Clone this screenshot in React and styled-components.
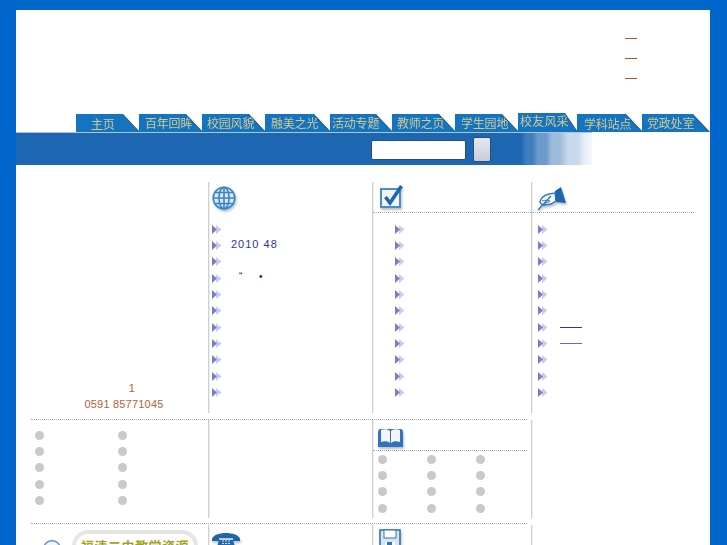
import React from 'react'
import styled, { createGlobalStyle } from 'styled-components'

const Global = createGlobalStyle`
  html, body { margin: 0; padding: 0; height: 545px; overflow: hidden; background: #0066cc; }
  body { font-family: "Liberation Sans", "Noto Sans CJK SC", sans-serif; }
`

const Page = styled.div`
  width: 694px;
  height: 535px;
  margin: 10px 0 0 16px;
  background: #fff;
  overflow: hidden;
`

const Header = styled.div`
  height: 94px;
  padding-top: 28px;
  box-sizing: border-box;
  display: flex;
  flex-direction: column;
  align-items: flex-end;
  gap: 19px;
  padding-right: 73px;
`

const Dash = styled.span`
  width: 12px;
  height: 1px;
  background: #c2531f;
`

const Tabs = styled.div`
  height: 18px;
  padding-left: 60px;
  display: flex;
  margin-top: 10px;
  align-items: flex-end;
`

const Tab = styled.div`
  width: ${({ $w }) => $w}px;
  height: ${({ $active }) => ($active ? 19 : 18)}px;
  filter: drop-shadow(1px 0 0 #234f7c);
`

const TabFace = styled.div`
  height: 100%;
  box-sizing: border-box;
  padding: ${({ $drop }) => $drop}px 0 0 ${({ $pad }) => $pad}px;
  background: #1474c0;
  clip-path: polygon(0 0, calc(100% - ${({ $active }) => ($active ? 13 : 17)}px) 0, 100% 100%, 0 100%);
  color: #d2c98e;
  font-size: 12px;
  line-height: 18px;
  letter-spacing: ${({ $active }) => ($active ? 0.2 : -0.2)}px;
  white-space: nowrap;
`

const SearchBar = styled.div`
  width: 576px;
  height: 33px;
  border-top: 1px solid #a9c7e4;
  display: flex;
  align-items: center;
  padding-left: 355px;
  box-sizing: border-box;
  gap: 7px;
  background: linear-gradient(
    90deg,
    #1c66b2 0,
    #1c66b2 505px,
    #3f7dbd 510px,
    #3f7dbd 516px,
    #6c9acb 522px,
    #6c9acb 530px,
    #9dbcdc 536px,
    #9dbcdc 544px,
    #c8d9eb 552px,
    #c8d9eb 562px,
    #e6eef7 568px,
    #f4f8fc 576px
  );
`

const SearchInput = styled.div`
  width: 95px;
  height: 20px;
  margin-top: 2px;
  box-sizing: border-box;
  background: #fff;
  border: 1px solid #24507f;
  border-radius: 2px;
`

const SearchButton = styled.div`
  width: 18px;
  height: 25px;
  box-sizing: border-box;
  background: linear-gradient(#e6e8ee, #c9ccd6);
  border: 1px solid #24507f;
  border-radius: 2px;
`

const TopGrid = styled.div`
  display: grid;
  grid-template-columns: 192px 164px 159px 163px;
  margin-top: 17px;
  height: 231px;
`

const Cell = styled.div`
  box-sizing: border-box;
  border-left: 1px solid #cfcfcf;
  box-shadow: inset 1px 0 0 #eeeeee;
`

const Contact = styled.div`
  box-sizing: border-box;
  padding: 198px 0 0 24px;
  text-align: center;
  color: #b5623a;
  font-size: 11px;
  line-height: 16px;
  letter-spacing: 0.2px;
`

const ContactNo = styled.span`
  margin-left: 16px;
`

const IconHead = styled.div`
  height: 31px;
  padding: ${({ $top }) => $top}px 0 0 ${({ $pad }) => $pad}px;
  margin-right: ${({ $trim }) => $trim || 0}px;
  box-sizing: border-box;
  border-bottom: ${({ $dotted }) => ($dotted ? '1px dotted #aaa' : 'none')};
  display: flex;
  align-items: flex-start;
  svg { filter: drop-shadow(1px 2px 1px rgba(0, 0, 0, 0.25)); }
`

const ArrowList = styled.div`
  padding: 8px 0 0 ${({ $left }) => $left}px;
  display: flex;
  flex-direction: column;
`

const ArrowRow = styled.div`
  height: 16.35px;
  display: flex;
  align-items: center;
  gap: 9px;
  color: #33339a;
  font-size: 11px;
  letter-spacing: 1px;
  white-space: pre;
`

const RowText = styled.span`
  margin-bottom: 3px;
`

const Marks = styled.span`
  margin: 0 0 3px 8px;
  color: #1a1a80;
  font-size: 10px;
  word-spacing: 12px;
`

const RowLine = styled.span`
  width: 22px;
  height: 1px;
  margin-left: 3px;
  background: ${({ $faint }) => ($faint ? '#6a6ab8' : '#3333a0')};
`

const Rule = styled.div`
  width: 496px;
  margin: ${({ $gap }) => $gap}px 0 0 15px;
  border-top: 1px dotted #aaa;
`

const MiddleGrid = styled.div`
  display: grid;
  grid-template-columns: 192px 164px 159px 20px;
  height: 98px;
`

const Dots = styled.div`
  display: grid;
  grid-template-columns: repeat(${({ $cols }) => $cols}, ${({ $gap }) => $gap}px);
  grid-auto-rows: 16.35px;
  padding: ${({ $top }) => $top}px 0 0 ${({ $left }) => $left}px;
`

const Dot = styled.span`
  width: 9px;
  height: 9px;
  border-radius: 50%;
  background: #c9c9c9;
  align-self: center;
`

const BottomGrid = styled.div`
  display: grid;
  grid-template-columns: 192px 164px 159px 20px;
  height: 30px;
  margin-top: 1px;
`

const BottomRow = styled.div`
  display: flex;
  align-items: flex-start;
  padding-left: 26px;
`

const SearchMark = styled.svg`
  width: 20px;
  height: 16px;
  margin: 14px 0 0 0;
`

const Badge = styled.div`
  margin: 5px 0 0 10px;
  width: 126px;
  height: 30px;
  box-sizing: border-box;
  padding-top: 6px;
  border: 4px solid #e6e6e6;
  border-bottom: none;
  border-radius: 16px 16px 0 0;
  text-align: center;
  color: #a3a31c;
  font-size: 13px;
  line-height: 14px;
  font-weight: bold;
  letter-spacing: 0.5px;
  white-space: nowrap;
`

const Arrow = () => (
  <svg width="10" height="9" viewBox="0 0 10 9">
    <path d="M4 0l5.5 4.5L4 9z" fill="#c8ccf4" />
    <path d="M0 0l5 4.5L0 9z" fill="#7a7ec4" />
  </svg>
)

const Globe = () => (
  <svg width="25" height="25" viewBox="0 0 25 25" fill="none" stroke="#3a84c8" strokeWidth="1.6">
    <circle cx="12" cy="12" r="10.8" fill="#d8e8f5" />
    <ellipse cx="12" cy="12" rx="5" ry="10.8" />
    <path d="M12 1v22M1 12h22M3 6.5h18M3 17.5h18" />
  </svg>
)

const Check = () => (
  <svg width="24" height="24" viewBox="0 0 24 24" fill="none">
    <rect x="1" y="5" width="19" height="18" stroke="#4a8ccc" strokeWidth="2" fill="#f0f5fb" />
    <path d="M5.5 13l4.5 6L21.5 2" stroke="#1c66b2" strokeWidth="3.6" />
  </svg>
)

const Pen = () => (
  <svg width="29" height="24" viewBox="0 0 29 24" fill="none">
    <path d="M3 15c1-4 5-7 9-8l6-1 1 8-5 3-7 1c-2 0-3-1-4-3z" fill="#fff" stroke="#2f7cc4" strokeWidth="1.4" />
    <path d="M5 14c3-1 6-1 8 0M7 17l6-3" stroke="#2f7cc4" strokeWidth="1" />
    <path d="M18 4l6-4 5 16-10-1z" fill="#1c66b2" />
    <path d="M1 23L14 9" stroke="#2f7cc4" strokeWidth="1.6" />
  </svg>
)

const Book = () => (
  <svg width="25" height="20" viewBox="0 0 25 20" fill="none">
    <path d="M0 5c0-3 1-4 2-4h21c1 0 2 1 2 4v14H0z" fill="#2f74bc" />
    <path d="M3 2c3-1 7-1 9 1v12c-2-2-6-2-9-1zM22 2c-3-1-7-1-9 1v12c2-2 6-2 9-1z" fill="#f2f6fb" />
  </svg>
)

const Phone = () => (
  <svg width="28" height="15" viewBox="0 0 28 15">
    <path d="M0 7C2-1 26-1 28 7v2h-7V6H7v3H0z" fill="#1c66b2" />
    <path d="M7 8h14l2 7H5z" fill="#1c66b2" />
    <path d="M10 9h2M13 9h2M16 9h2M10 11.5h2M13 11.5h2M16 11.5h2" stroke="#cfe0f2" />
  </svg>
)

const Disk = () => (
  <svg width="22" height="17" viewBox="0 0 22 17" fill="none">
    <rect x="1" y="1" width="20" height="18" stroke="#2f74bc" strokeWidth="1.6" fill="#d8e6f4" />
    <rect x="5" y="1" width="12" height="8" stroke="#2f74bc" fill="#fff" />
    <rect x="6" y="13" width="10" height="6" fill="#fff" />
    <rect x="8" y="13" width="5" height="6" fill="#2f74bc" />
  </svg>
)

const tabs = [
  { label: '主页', w: 63, pad: 15, drop: 2 },
  { label: '百年回眸', w: 63, pad: 6, drop: 1 },
  { label: '校园风貌', w: 63, pad: 5, drop: 1 },
  { label: '融美之光', w: 65, pad: 6, drop: 1 },
  { label: '活动专题', w: 62, pad: 2, drop: 1 },
  { label: '教师之页', w: 63, pad: 5, drop: 1 },
  { label: '学生园地', w: 63, pad: 6, drop: 1 },
  { label: '校友风采', w: 59, pad: 2, drop: 0, active: true },
  { label: '学科站点', w: 65, pad: 7, drop: 2 },
  { label: '党政处室', w: 67, pad: 5, drop: 1 },
]

const rows = n => Array.from({ length: n })

const App = () => (
  <Page>
    <Global />
    <Header>
      <Dash /><Dash /><Dash />
    </Header>
    <Tabs>
      {tabs.map(t => (
        <Tab key={t.label} $w={t.w} $active={t.active}>
          <TabFace $pad={t.pad} $drop={t.drop} $active={t.active}>{t.label}</TabFace>
        </Tab>
      ))}
    </Tabs>
    <SearchBar>
      <SearchInput />
      <SearchButton />
    </SearchBar>

    <TopGrid>
      <Contact><ContactNo>1</ContactNo><br />0591 85771045</Contact>
      <Cell>
        <IconHead $pad={3} $top={4}><Globe /></IconHead>
        <ArrowList $left={3}>
          <ArrowRow><Arrow /></ArrowRow>
          <ArrowRow><Arrow /><RowText>2010 48</RowText></ArrowRow>
          <ArrowRow><Arrow /></ArrowRow>
          <ArrowRow><Arrow /><Marks>“ •</Marks></ArrowRow>
          {rows(7).map((_, i) => <ArrowRow key={i}><Arrow /></ArrowRow>)}
        </ArrowList>
      </Cell>
      <Cell>
        <IconHead $pad={7} $top={2} $dotted><Check /></IconHead>
        <ArrowList $left={22}>
          {rows(11).map((_, i) => <ArrowRow key={i}><Arrow /></ArrowRow>)}
        </ArrowList>
      </Cell>
      <Cell>
        <IconHead $pad={5} $top={5} $dotted><Pen /></IconHead>
        <ArrowList $left={6}>
          {rows(6).map((_, i) => <ArrowRow key={i}><Arrow /></ArrowRow>)}
          <ArrowRow><Arrow /><RowLine /></ArrowRow>
          <ArrowRow><Arrow /><RowLine $faint /></ArrowRow>
          {rows(3).map((_, i) => <ArrowRow key={i}><Arrow /></ArrowRow>)}
        </ArrowList>
      </Cell>
    </TopGrid>

    <Rule $gap={6} />
    <MiddleGrid>
      <Dots $cols={2} $gap={83} $top={7} $left={19}>
        {rows(10).map((_, i) => <Dot key={i} />)}
      </Dots>
      <Cell />
      <Cell>
        <IconHead $pad={5} $top={8} $trim={4} $dotted><Book /></IconHead>
        <Dots $cols={3} $gap={49} $top={0} $left={5}>
          {rows(12).map((_, i) => <Dot key={i} />)}
        </Dots>
      </Cell>
      <Cell />
    </MiddleGrid>
    <Rule $gap={5} />
    <BottomGrid>
      <BottomRow>
        <SearchMark viewBox="0 0 20 16" fill="none">
          <circle cx="10" cy="10" r="8.4" stroke="#6b9fd4" strokeWidth="1.6" fill="#f4f8fc" />
        </SearchMark>
        <Badge>福清二中教学资源</Badge>
      </BottomRow>
      <Cell><IconHead $pad={3} $top={7}><Phone /></IconHead></Cell>
      <Cell><IconHead $pad={6} $top={4}><Disk /></IconHead></Cell>
      <Cell />
    </BottomGrid>
  </Page>
)

export default App
